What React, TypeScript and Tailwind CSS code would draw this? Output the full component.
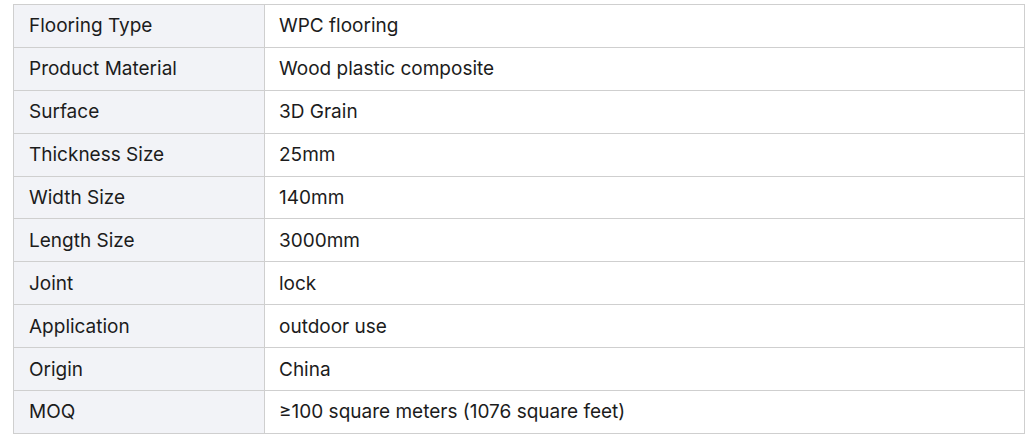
const rows: [string, string][] = [
  ['Flooring Type', 'WPC flooring'],
  ['Product Material', 'Wood plastic composite'],
  ['Surface', '3D Grain'],
  ['Thickness Size', '25mm'],
  ['Width Size', '140mm'],
  ['Length Size', '3000mm'],
  ['Joint', 'lock'],
  ['Application', 'outdoor use'],
  ['Origin', 'China'],
  ['MOQ', '≥100 square meters (1076 square feet)'],
]

export default function App() {
  return (
    <div className="bg-white w-[1030px] h-[439px] pt-[4px] pl-[13px] font-['Inter',sans-serif] text-[19px] text-[#1c1c1c]">
      <table className="w-[1012px] border-collapse border border-[#cfcfcf]">
        <tbody>
          {rows.map(([label, value]) => (
            <tr key={label} className="h-[42.9px]">
              <td className="w-[251px] border border-[#cfcfcf] bg-[#f2f3f7] px-[15px] py-0 align-middle leading-none">
                {label}
              </td>
              <td className="border border-[#cfcfcf] px-[14px] py-0 align-middle leading-none">{value}</td>
            </tr>
          ))}
        </tbody>
      </table>
    </div>
  )
}
